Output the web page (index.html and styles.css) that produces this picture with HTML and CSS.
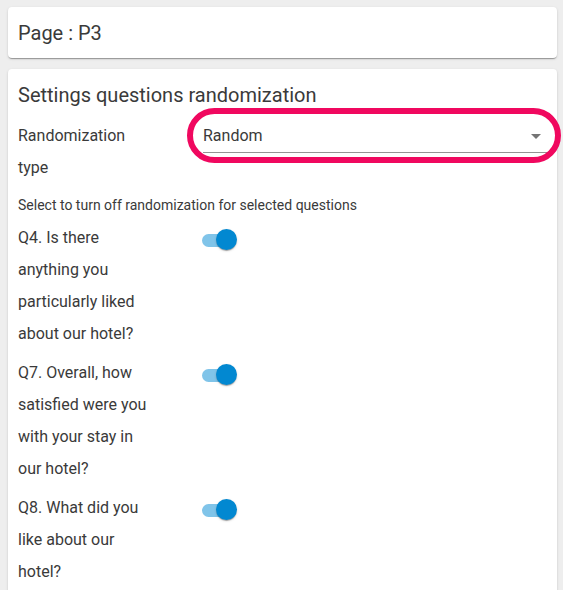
FILE: index.html
```html
<!DOCTYPE html>
<html lang="en">
<head>
<meta charset="utf-8">
<title>Page P3</title>
<link rel="stylesheet" href="styles.css">
</head>
<body>
  <div class="card page-card">
    <h1 class="page-title">Page : P3</h1>
  </div>
  <div class="card settings-card">
    <h2 class="settings-title">Settings questions randomization</h2>
    <div class="row">
      <div class="label">Randomization type</div>
      <div class="control">
        <div class="select">
          <span class="select-value">Random</span>
          <svg class="select-arrow" viewBox="0 0 24 24" width="24" height="24"><path d="M7 10l5 5 5-5z"/></svg>
          <div class="highlight"></div>
        </div>
      </div>
    </div>
    <p class="helper">Select to turn off randomization for selected questions</p>
    <div class="questions">
      <div class="row">
        <div class="label">Q4. Is there anything you particularly liked about our hotel?</div>
        <div class="control"><span class="switch"><span class="track"></span><span class="thumb"></span></span></div>
      </div>
      <div class="row">
        <div class="label">Q7. Overall, how satisfied were you with your stay in our hotel?</div>
        <div class="control"><span class="switch"><span class="track"></span><span class="thumb"></span></span></div>
      </div>
      <div class="row">
        <div class="label">Q8. What did you like about our hotel?</div>
        <div class="control"><span class="switch"><span class="track"></span><span class="thumb"></span></span></div>
      </div>
    </div>
  </div>
</body>
</html>
```
FILE: styles.css
```css
html, body {
  margin: 0;
  background: #eeeeee;
}
body {
  padding: 7px 6px 0 8px;
  font-family: Roboto, "Liberation Sans", Arial, sans-serif;
  color: #3a3a3a;
}
.card {
  background: #ffffff;
  border-radius: 4px;
  box-shadow: 0 2px 1px -1px rgba(0,0,0,0.2), 0 1px 1px 0 rgba(0,0,0,0.14), 0 1px 3px 0 rgba(0,0,0,0.12);
}
.page-card {
  padding: 12px 10px 11px;
}
.page-title {
  margin: 0;
  font-size: 20px;
  font-weight: 400;
  line-height: 28px;
}
.settings-card {
  margin-top: 11px;
  padding: 12px 9px 12px 10px;
}
.settings-title {
  margin: 0 0 11px;
  font-size: 20px;
  font-weight: 400;
  line-height: 28px;
}
.row {
  display: grid;
  grid-template-columns: 136px 1fr;
  column-gap: 49px;
  align-items: start;
}
.label {
  font-size: 16px;
  line-height: 32px;
}
.control {
  position: relative;
}
.select {
  position: relative;
  height: 32px;
  border-bottom: 1px solid #949494;
  font-size: 16px;
  line-height: 32px;
}
.select-value {
  display: block;
}
.select-arrow {
  position: absolute;
  right: 0;
  top: 4px;
  fill: #757575;
}
.highlight {
  position: absolute;
  left: -16px;
  top: -12px;
  right: -13px;
  bottom: -11px;
  border: 6px solid #f0085f;
  border-radius: 30px;
  pointer-events: none;
}
.helper {
  margin: 11px 0 0;
  font-size: 14px;
  line-height: 20px;
}
.questions {
  display: flex;
  flex-direction: column;
  gap: 7px;
  margin-top: 7px;
}
.switch {
  position: relative;
  display: block;
  width: 36px;
  height: 32px;
  margin-left: -1px;
}
.track {
  position: absolute;
  left: 0;
  top: 12px;
  width: 32px;
  height: 13px;
  border-radius: 7px;
  background: #80c4e9;
}
.thumb {
  position: absolute;
  left: 14px;
  top: 7px;
  width: 21px;
  height: 21px;
  border-radius: 50%;
  background: #0288d1;
  box-shadow: 0 2px 1px -1px rgba(0,0,0,0.2), 0 1px 1px 0 rgba(0,0,0,0.14), 0 1px 3px 0 rgba(0,0,0,0.12);
}
```
